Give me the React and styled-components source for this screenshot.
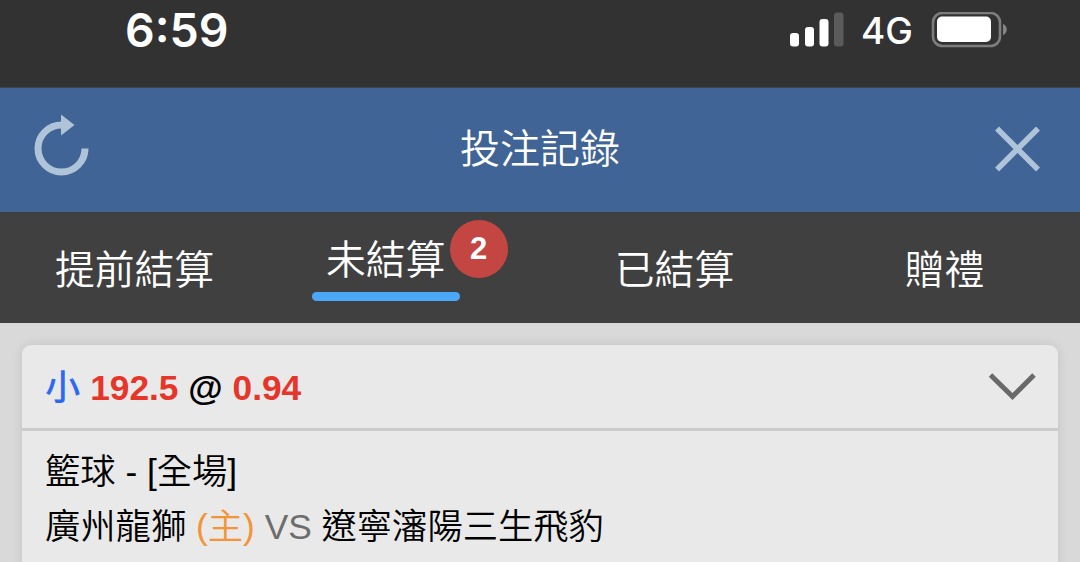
import {styled, createGlobalStyle} from 'styled-components';

const GlobalStyle = createGlobalStyle`
  * {
    box-sizing: border-box;
  }

  body {
    margin: 0;
    background: #d9d9d9;
    font-family: "Liberation Sans", "Noto Sans CJK TC", sans-serif;
  }
`;

const Page = styled.div`
  display: flex;
  flex-direction: column;
  height: 562px;
  overflow: hidden;
`;

const StatusBar = styled.div`
  display: flex;
  justify-content: space-between;
  flex: none;
  height: 88px;
  padding: 0 72px 0 125px;
  background: #323232;
  border-bottom: 1px solid #3b4653;
  color: #fff;
  font-family: Inter, sans-serif;
`;

const Clock = styled.div`
  height: 60px;
  font-size: 46.5px;
  font-weight: 600;
  line-height: 60px;
`;

const StatusIcons = styled.div`
  display: flex;
  align-items: center;
  height: 60px;
`;

const Network = styled.span`
  width: 87px;
  padding: 2px 0 0 17px;
  font-size: 37px;
  font-weight: 450;
  line-height: 60px;
`;

const TitleBar = styled.header`
  display: flex;
  align-items: center;
  justify-content: space-between;
  flex: none;
  height: 124px;
  padding: 0 40px 0 34px;
  background: #406495;
`;

const Title = styled.h1`
  margin: 0 0 8px 6px;
  color: #fff;
  font-family: "Noto Sans CJK TC", sans-serif;
  font-size: 40px;
  font-weight: 350;
  line-height: 60px;
`;

const IconButton = styled.button`
  display: flex;
  justify-content: ${({$align}) => $align};
  width: 60px;
  padding: 0 0 2px;
  border: 0;
  background: none;
`;

const Tabs = styled.nav`
  display: grid;
  grid-template-columns: repeat(4, 270px);
  flex: none;
  height: 111px;
  background: #404040;
`;

const Tab = styled.div`
  display: flex;
  justify-content: center;
  align-items: flex-start;
  padding-top: ${({$active}) => ($active ? '15px' : '25px')};
  padding-right: ${({$active}) => ($active ? '38px' : '1px')};
  color: #fff;
  font-family: "Noto Sans CJK TC", sans-serif;
  font-size: 39.8px;
  font-weight: 350;
  line-height: 60px;
`;

const TabLabel = styled.span`
  position: relative;
  padding: 0 14px;
`;

const Underline = styled.div`
  width: 148px;
  height: 9px;
  margin: 5px -14px 0;
  border-radius: 5px;
  background: #4ba8f7;
`;

const Badge = styled.span`
  position: absolute;
  top: -7px;
  left: 138px;
  width: 58px;
  height: 58px;
  padding-right: 1px;
  border-radius: 50%;
  background: #c44642;
  font-family: "Liberation Sans", sans-serif;
  font-size: 31px;
  font-weight: 700;
  line-height: 58px;
  text-align: center;
`;

const List = styled.main`
  flex: 1;
  padding: 22px 22px 0;
  background: #d9d9d9;
`;

const Card = styled.section`
  height: 260px;
  border-radius: 9px;
  background: #e9e9e9;
  box-shadow: 0 0 12px rgba(0, 0, 0, 0.1);
  color: #000;
  font-size: 35.3px;
`;

const CardHeader = styled.div`
  display: flex;
  align-items: center;
  justify-content: space-between;
  height: 86px;
  padding: 0 22px 0 23px;
  border-bottom: 3px solid #cbcbcb;
`;

const Pick = styled.div`
  padding-top: 2px;
  font-weight: 700;
  line-height: 54px;
  white-space: pre;
`;

const Side = styled.span`
  color: #2e6af1;
  font-weight: 500;
`;

const Odds = styled.span`
  color: #e63529;
`;

const CardBody = styled.div`
  padding: 13px 23px 0;
`;

const Line = styled.div`
  height: 55px;
  font-weight: 350;
  line-height: 55px;
  white-space: pre;
`;

const Host = styled.span`
  color: #f29437;
`;

const Versus = styled.span`
  color: #6d6d6d;
`;

const tabs = [
  {label: '提前結算'},
  {label: '未結算', count: 2},
  {label: '已結算'},
  {label: '贈禮'},
];

function SignalIcon() {
  return (
    <svg width="55" height="36" viewBox="0 0 55 36">
      <g fill="#fff">
        <rect x="1" y="21" width="9" height="13.5" rx="3" />
        <rect x="16" y="15" width="9" height="19.5" rx="3" />
        <rect x="30.5" y="7" width="9" height="27.5" rx="3" />
        <rect x="45" y="0.5" width="9.5" height="34" rx="3" fill="#5b5b5b" />
      </g>
    </svg>
  );
}

function BatteryIcon() {
  return (
    <svg width="77" height="36" viewBox="0 0 77 36">
      <rect x="2" y="1" width="67" height="33" rx="9.5" fill="none" stroke="#7d7d7d" strokeWidth="2.6" />
      <rect x="6" y="4.5" width="54" height="25.5" rx="5" fill="#fff" />
      <path d="M72 12c5 1.500 5 9.500 0 11z" fill="#848484" />
    </svg>
  );
}

function RefreshIcon() {
  return (
    <svg width="56" height="70" viewBox="0 0 56 70">
      <path d="M51 34.5A23.500 23.500 0 1 1 27.500 11" fill="none" stroke="#afc3d9" strokeWidth="7" />
      <path d="M27 0.500L40.500 11L27 21.500z" fill="#afc3d9" />
    </svg>
  );
}

function CloseIcon() {
  return (
    <svg width="45" height="46" viewBox="0 0 45 46">
      <path d="M2 2.500L43 43.500M43 2.500L2 43.500" stroke="#afc3d9" strokeWidth="5.5" />
    </svg>
  );
}

function ChevronIcon() {
  return (
    <svg width="48" height="30" viewBox="0 0 48 30">
      <path d="M2.500 3L24.500 24.500L46 3" fill="none" stroke="#696969" strokeWidth="5" />
    </svg>
  );
}

export default function App() {
  return (
    <Page>
      <GlobalStyle />
      <StatusBar>
        <Clock>6:59</Clock>
        <StatusIcons>
          <SignalIcon />
          <Network>4G</Network>
          <BatteryIcon />
        </StatusIcons>
      </StatusBar>
      <TitleBar>
        <IconButton $align="flex-start" aria-label="refresh">
          <RefreshIcon />
        </IconButton>
        <Title>投注記錄</Title>
        <IconButton $align="flex-end" aria-label="close">
          <CloseIcon />
        </IconButton>
      </TitleBar>
      <Tabs>
        {tabs.map(({label, count}) => (
          <Tab key={label} $active={!!count}>
            <TabLabel>
              {label}
              {count && <Underline />}
              {count && <Badge>{count}</Badge>}
            </TabLabel>
          </Tab>
        ))}
      </Tabs>
      <List>
        <Card>
          <CardHeader>
            <Pick>
              <Side>小</Side> <Odds>192.5</Odds> @ <Odds>0.94</Odds>
            </Pick>
            <ChevronIcon />
          </CardHeader>
          <CardBody>
            <Line>籃球 - [全場]</Line>
            <Line>
              廣州龍獅 <Host>(主)</Host> <Versus>VS</Versus> 遼寧瀋陽三生飛豹
            </Line>
          </CardBody>
        </Card>
      </List>
    </Page>
  );
}
